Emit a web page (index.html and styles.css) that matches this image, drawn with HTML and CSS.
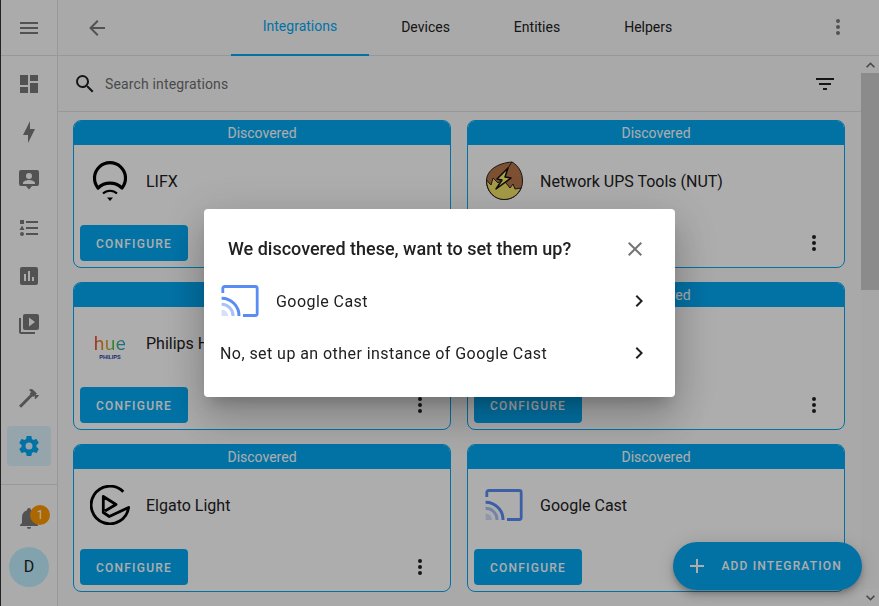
FILE: index.html
```html
<!DOCTYPE html>
<html lang="en">
<head>
    <meta charset="UTF-8">
    <title>Integrations</title>
    <link rel="stylesheet" href="styles.css">
</head>
<body>
    <svg class="defs" width="0" height="0">
        <symbol id="i-dots" viewBox="0 0 24 24"><path d="M12,16A2,2 0 0,1 14,18A2,2 0 0,1 12,20A2,2 0 0,1 10,18A2,2 0 0,1 12,16M12,10A2,2 0 0,1 14,12A2,2 0 0,1 12,14A2,2 0 0,1 10,12A2,2 0 0,1 12,10M12,4A2,2 0 0,1 14,6A2,2 0 0,1 12,8A2,2 0 0,1 10,6A2,2 0 0,1 12,4Z"/></symbol>
        <symbol id="i-chevron" viewBox="0 0 24 24"><path d="M8.59,16.58L13.17,12L8.59,7.41L10,6L16,12L10,18L8.59,16.58Z"/></symbol>
        <symbol id="i-cast" viewBox="0 0 40 40">
            <path d="M2.8 12V7.5A2 2 0 0 1 4.8 5.5H35.2A2 2 0 0 1 37.2 7.5V32.5A2 2 0 0 1 35.2 34.5H23" fill="none" stroke="#5a8cf5" stroke-width="2.8"/>
            <path d="M1.6 17.2A17.4 17.4 0 0 1 19 35" fill="none" stroke="#5a8cf5" stroke-width="3"/>
            <path d="M1.6 23.2A11.4 11.4 0 0 1 13 35" fill="none" stroke="#a9c3f8" stroke-width="3"/>
            <path d="M1.6 28.6A6.4 6.4 0 0 1 8 35H1.6Z" fill="#d3e0fc"/>
        </symbol>
    </svg>

    <aside class="sidebar">
        <div class="sidebar-head">
            <svg class="icon" viewBox="0 0 24 24"><path d="M3,6H21V8H3V6M3,11H21V13H3V11M3,16H21V18H3V16Z"/></svg>
        </div>
        <nav class="nav">
            <a class="nav-item"><svg class="icon" viewBox="0 0 24 24"><path d="M13,3V9H21V3M13,21H21V11H13M3,21H11V15H3M3,13H11V3H3V13Z"/></svg></a>
            <a class="nav-item"><svg class="icon" viewBox="0 0 24 24"><path d="M11,15H6L13,1V9H18L11,23V15Z"/></svg></a>
            <a class="nav-item"><svg class="icon" viewBox="0 0 24 24"><path fill-rule="evenodd" d="M4 2H20A2 2 0 0 1 22 4V16A2 2 0 0 1 20 18H15L12 21.5L9 18H4A2 2 0 0 1 2 16V4A2 2 0 0 1 4 2ZM12 5A3 3 0 0 0 12 11A3 3 0 0 0 12 5ZM6 16H18V15C18 13 14 12 12 12C10 12 6 13 6 15Z"/></svg></a>
            <a class="nav-item"><svg class="icon" viewBox="0 0 24 24"><path d="M5,9.5L7.5,14H2.5L5,9.5M3,4H7V8H3V4M5,20A2,2 0 0,0 7,18A2,2 0 0,0 5,16A2,2 0 0,0 3,18A2,2 0 0,0 5,20M9,5V7H21V5H9M9,19H21V17H9V19M9,13H21V11H9V13Z"/></svg></a>
            <a class="nav-item"><svg class="icon" viewBox="0 0 24 24"><path fill-rule="evenodd" d="M9 17H7V10H9V17M13 17H11V7H13V17M17 17H15V13H17V17M19 3H5C3.9 3 3 3.9 3 5V19C3 20.1 3.9 21 5 21H19C20.1 21 21 20.1 21 19V5C21 3.9 20.1 3 19 3Z"/></svg></a>
            <a class="nav-item"><svg class="icon" viewBox="0 0 24 24"><path fill-rule="evenodd" d="M4 6H2V20C2 21.1 2.9 22 4 22H18V20H4V6M20 2H8C6.9 2 6 2.9 6 4V16C6 17.1 6.9 18 8 18H20C21.1 18 22 17.1 22 16V4C22 2.9 21.1 2 20 2M12 14.5V5.5L18 10L12 14.5Z"/></svg></a>
        </nav>
        <div class="nav-bottom">
            <a class="nav-item"><svg class="icon" viewBox="0 0 24 24"><path d="M2 19.63L13.43 8.2L12.72 7.5L14.14 6.07L12 3.89C13.2 2.7 15.09 2.7 16.27 3.89L19.87 7.5L18.45 8.91H21.29L22 9.62L18.45 13.21L17.74 12.5V9.62L16.27 11.04L15.56 10.33L4.13 21.76L2 19.63Z"/></svg></a>
            <a class="nav-item selected"><svg class="icon" viewBox="0 0 24 24"><path d="M12,15.5A3.5,3.5 0 0,1 8.5,12A3.5,3.5 0 0,1 12,8.5A3.5,3.5 0 0,1 15.5,12A3.5,3.5 0 0,1 12,15.5M19.43,12.97C19.47,12.65 19.5,12.33 19.5,12C19.5,11.67 19.47,11.34 19.43,11L21.54,9.37C21.73,9.22 21.78,8.95 21.66,8.73L19.66,5.27C19.54,5.05 19.27,4.96 19.05,5.05L16.56,6.05C16.04,5.66 15.5,5.32 14.87,5.07L14.5,2.42C14.46,2.18 14.25,2 14,2H10C9.75,2 9.54,2.18 9.5,2.42L9.13,5.07C8.5,5.32 7.96,5.66 7.44,6.05L4.95,5.05C4.73,4.96 4.46,5.05 4.34,5.27L2.34,8.73C2.21,8.95 2.27,9.22 2.46,9.37L4.57,11C4.53,11.34 4.5,11.67 4.5,12C4.5,12.33 4.53,12.65 4.57,12.97L2.46,14.63C2.27,14.78 2.21,15.05 2.34,15.27L4.34,18.73C4.46,18.95 4.73,19.03 4.95,18.95L7.44,17.94C7.96,18.34 8.5,18.68 9.13,18.93L9.5,21.58C9.54,21.82 9.75,22 10,22H14C14.25,22 14.46,21.82 14.5,21.58L14.87,18.93C15.5,18.67 16.04,18.34 16.56,17.94L19.05,18.95C19.27,19.03 19.54,18.95 19.66,18.73L21.66,15.27C21.78,15.05 21.73,14.78 21.54,14.63L19.43,12.97Z"/></svg></a>
        </div>
        <div class="sidebar-foot">
            <div class="bell">
                <svg class="icon" viewBox="0 0 24 24"><path d="M21,19V20H3V19L5,17V11C5,7.9 7.03,5.17 10,4.29C10,4.19 10,4.1 10,4A2,2 0 0,1 12,2A2,2 0 0,1 14,4C14,4.1 14,4.19 14,4.29C16.97,5.17 19,7.9 19,11V17L21,19M14,21A2,2 0 0,1 12,23A2,2 0 0,1 10,21"/></svg>
                <span class="badge">1</span>
            </div>
            <div class="avatar">D</div>
        </div>
    </aside>

    <main class="main">
        <header class="topbar">
            <svg class="icon back" viewBox="0 0 24 24"><path d="M20,11V13H8L13.5,18.5L12.08,19.92L4.16,12L12.08,4.08L13.5,5.5L8,11H20Z"/></svg>
            <div class="tabs">
                <a class="tab active">Integrations</a>
                <a class="tab">Devices</a>
                <a class="tab">Entities</a>
                <a class="tab">Helpers</a>
            </div>
            <svg class="icon more"><use href="#i-dots"/></svg>
        </header>

        <div class="pane">
            <div class="content">
                <div class="search">
                    <svg class="icon dark" viewBox="0 0 24 24"><path d="M9.5,3A6.5,6.5 0 0,1 16,9.5C16,11.11 15.41,12.59 14.44,13.73L14.71,14H15.5L20.5,19L19,20.5L14,15.5V14.71L13.73,14.44C12.59,15.41 11.11,16 9.5,16A6.5,6.5 0 0,1 3,9.5A6.5,6.5 0 0,1 9.5,3M9.5,5C7,5 5,7 5,9.5C5,12 7,14 9.5,14C12,14 14,12 14,9.5C14,7 12,5 9.5,5Z"/></svg>
                    <span class="search-text">Search integrations</span>
                    <svg class="icon dark filter" viewBox="0 0 24 24"><path d="M6,13H18V11H6M3,6V8H21V6M10,18H14V16H10V18Z"/></svg>
                </div>

                <div class="grid">
                    <section class="card">
                        <div class="card-head">Discovered</div>
                        <div class="card-body">
                            <svg class="logo" viewBox="0 0 40 40" fill="none" stroke="#000">
                                <path stroke-width="3.2" stroke-linejoin="round" d="M8 27A15.5 15.5 0 1 1 32 27A17 17 0 0 0 8 27Z"/>
                                <path stroke-width="2" d="M13 32.5A10 10 0 0 1 27 32.5"/>
                                <path fill="#000" stroke="none" d="M17 36.5H23L20 40Z"/>
                            </svg>
                            <span class="card-name">LIFX</span>
                        </div>
                        <div class="card-actions">
                            <button class="btn">CONFIGURE</button>
                            <svg class="icon dots"><use href="#i-dots"/></svg>
                        </div>
                    </section>

                    <section class="card">
                        <div class="card-head">Discovered</div>
                        <div class="card-body">
                            <svg class="logo" viewBox="0 0 40 40">
                                <path fill="#b8764a" stroke="#222" d="M28 1C35 5 38.5 12 38.5 20C38.5 31 30 38.5 20 38.5C11 38.5 2.5 31 2.5 20C2.5 9 14 2 28 1Z"/>
                                <path fill="#f4e468" stroke="#222" d="M2.5 19L7 24L9 17L14 22L18 17L26 27L29 23L31 28L37 27C34 34 28 38.5 20 38.5C11 38.5 2.5 31 2.5 19Z"/>
                                <path fill="#fff36a" stroke="#111" stroke-width="1.5" stroke-linejoin="round" d="M24 7L13 18L18 19L12 28L27 17L21 16Z"/>
                                <path fill="none" stroke="#222" d="M28 1L24 7"/>
                            </svg>
                            <span class="card-name">Network UPS Tools (NUT)</span>
                        </div>
                        <div class="card-actions">
                            <button class="btn">CONFIGURE</button>
                            <svg class="icon dots"><use href="#i-dots"/></svg>
                        </div>
                    </section>

                    <section class="card">
                        <div class="card-head">Discovered</div>
                        <div class="card-body">
                            <div class="logo hue">
                                <span class="hue-word">hue</span>
                                <span class="hue-brand">PHILIPS</span>
                            </div>
                            <span class="card-name">Philips Hue</span>
                        </div>
                        <div class="card-actions">
                            <button class="btn">CONFIGURE</button>
                            <svg class="icon dots"><use href="#i-dots"/></svg>
                        </div>
                    </section>

                    <section class="card">
                        <div class="card-head">Discovered</div>
                        <div class="card-body"></div>
                        <div class="card-actions">
                            <button class="btn">CONFIGURE</button>
                            <svg class="icon dots"><use href="#i-dots"/></svg>
                        </div>
                    </section>

                    <section class="card">
                        <div class="card-head">Discovered</div>
                        <div class="card-body">
                            <svg class="logo" viewBox="0 0 40 40" fill="none" stroke="#000" stroke-width="2.8" stroke-linejoin="round">
                                <path d="M33.3 6.7A18.8 18.8 0 1 0 38.6 22.5L19.3 31.5L13.3 27.5V11.5L26 19.5L15 26"/>
                            </svg>
                            <span class="card-name">Elgato Light</span>
                        </div>
                        <div class="card-actions">
                            <button class="btn">CONFIGURE</button>
                            <svg class="icon dots"><use href="#i-dots"/></svg>
                        </div>
                    </section>

                    <section class="card">
                        <div class="card-head">Discovered</div>
                        <div class="card-body">
                            <svg class="logo"><use href="#i-cast"/></svg>
                            <span class="card-name">Google Cast</span>
                        </div>
                        <div class="card-actions">
                            <button class="btn">CONFIGURE</button>
                            <svg class="icon dots"><use href="#i-dots"/></svg>
                        </div>
                    </section>
                </div>
            </div>

            <div class="scrollbar">
                <div class="scroll-arrow"><svg viewBox="0 0 10 6"><path d="M0 5L5 0L10 5L8.7 6L5 2.5L1.3 6Z"/></svg></div>
                <div class="scroll-thumb"></div>
                <div class="scroll-track"></div>
                <div class="scroll-arrow"><svg viewBox="0 0 10 6"><path d="M0 1L5 6L10 1L8.7 0L5 3.5L1.3 0Z"/></svg></div>
            </div>
        </div>

        <button class="fab">
            <svg class="icon" viewBox="0 0 24 24"><path d="M19,13H13V19H11V13H5V11H11V5H13V11H19V13Z"/></svg>
            <span>ADD INTEGRATION</span>
        </button>
    </main>

    <div class="scrim"></div>

    <div class="dialog">
        <div class="dialog-head">
            <h2>We discovered these, want to set them up?</h2>
            <svg class="icon close" viewBox="0 0 24 24"><path d="M19,6.41L17.59,5L12,10.59L6.41,5L5,6.41L10.59,12L5,17.59L6.41,19L12,13.41L17.59,19L19,17.59L13.41,12L19,6.41Z"/></svg>
        </div>
        <div class="flow-item">
            <svg class="logo"><use href="#i-cast"/></svg>
            <span class="flow-name">Google Cast</span>
            <svg class="icon chevron"><use href="#i-chevron"/></svg>
        </div>
        <div class="flow-item">
            <span class="flow-text">No, set up an other instance of Google Cast</span>
            <svg class="icon chevron"><use href="#i-chevron"/></svg>
        </div>
    </div>
</body>
</html>
```
FILE: styles.css
```css
* {
    box-sizing: border-box;
}
body {
    margin: 0;
    height: 100vh;
    display: flex;
    overflow: hidden;
    font-family: Roboto, sans-serif;
    background-color: #fafafa;
    color: #212121;
}
.defs {
    position: absolute;
}
.icon {
    width: 24px;
    height: 24px;
    flex: none;
    display: block;
    fill: #7a7a7a;
}
.icon.dark {
    fill: #212121;
}

/* sidebar */
.sidebar {
    width: 58px;
    flex: none;
    display: flex;
    flex-direction: column;
    border-left: 1px solid #333333;
    border-right: 1px solid #e0e0e0;
    background-color: #fdfdfd;
}
.sidebar-head {
    height: 56px;
    flex: none;
    display: flex;
    align-items: center;
    justify-content: center;
    border-bottom: 1px solid #e0e0e0;
}
.nav {
    padding-top: 4px;
}
.nav-item {
    height: 48px;
    display: flex;
    align-items: center;
    justify-content: center;
}
.nav-bottom {
    margin-top: 26px;
    flex: 1;
}
.nav-item.selected {
    height: 40px;
    margin: 4px 6px 0;
    border-radius: 4px;
    background-color: rgba(3, 169, 244, 0.12);
}
.nav-item.selected .icon {
    fill: #03a9f4;
}
.sidebar-foot {
    height: 122px;
    flex: none;
    border-top: 1px solid #e0e0e0;
    display: flex;
    flex-direction: column;
    align-items: center;
    padding-top: 21px;
}
.bell {
    position: relative;
    width: 24px;
    height: 24px;
}
.badge {
    position: absolute;
    top: -1px;
    left: 13px;
    width: 20px;
    height: 20px;
    border-radius: 50%;
    background-color: #ff9800;
    color: #ffffff;
    font-size: 12px;
    line-height: 20px;
    text-align: center;
}
.avatar {
    width: 40px;
    height: 40px;
    margin-top: 17px;
    border-radius: 50%;
    background-color: #c0f0ff;
    font-size: 16px;
    line-height: 40px;
    text-align: center;
}

/* top bar */
.main {
    position: relative;
    flex: 1;
    min-width: 0;
    display: flex;
    flex-direction: column;
}
.topbar {
    height: 56px;
    flex: none;
    display: flex;
    align-items: center;
    justify-content: space-between;
    padding: 0 29px 0 27px;
    border-bottom: 1px solid #e0e0e0;
}
.more {
    margin-top: -1px;
}
.tabs {
    display: flex;
    align-self: stretch;
}
.tab {
    display: block;
    height: 56px;
    padding: 0 32px;
    font-size: 14px;
    line-height: 55px;
    color: #212121;
}
.tab.active {
    line-height: 53px;
    color: #03a9f4;
    border-bottom: 2px solid #03a9f4;
}

/* search + cards */
.pane {
    flex: 1;
    min-height: 0;
    display: flex;
}
.content {
    flex: 1;
    min-width: 0;
    overflow: hidden;
}
.search {
    height: 56px;
    display: flex;
    align-items: center;
    gap: 8px;
    padding: 0 24px 0 15px;
    border-bottom: 1px solid #e0e0e0;
}
.search-text {
    flex: 1;
    font-size: 14px;
    letter-spacing: 0.15px;
    color: #6e6e6e;
}
.grid {
    display: grid;
    grid-template-columns: 378px 378px;
    gap: 14px 16px;
    padding: 8px 0 0 15px;
}
.card {
    height: 148px;
    display: flex;
    flex-direction: column;
    border: 1px solid #03a9f4;
    border-radius: 8px;
    overflow: hidden;
    background-color: #ffffff;
}
.card-head {
    height: 24px;
    flex: none;
    background-color: #03a9f4;
    color: #ffffff;
    font-size: 14px;
    line-height: 24px;
    text-align: center;
}
.card-body {
    height: 80px;
    flex: none;
    display: flex;
    align-items: flex-start;
    padding: 16px 16px 0;
}
.logo {
    width: 40px;
    height: 40px;
    flex: none;
}
.card-name {
    margin-left: 16px;
    font-size: 16px;
    line-height: 42px;
}
.card-actions {
    display: flex;
    align-items: center;
    justify-content: space-between;
    padding: 0 18px 0 6px;
}
.btn {
    width: 108px;
    height: 36px;
    padding: 2px 0 0;
    border: none;
    border-radius: 4px;
    background-color: #03a9f4;
    color: #ffffff;
    font-family: inherit;
    font-size: 12px;
    font-weight: 500;
    letter-spacing: 1.25px;
}
.dots {
    fill: #212121;
}

/* hue logo */
.hue {
    display: flex;
    flex-direction: column;
    align-items: center;
    padding-top: 10px;
}
.hue-word {
    font-family: Lato, sans-serif;
    font-size: 19px;
    font-weight: 400;
    line-height: 19px;
    letter-spacing: 0.5px;
    background: linear-gradient(90deg, #e8352c, #f2a21e 35%, #55bd4a 60%, #1f9be0);
    -webkit-background-clip: text;
    background-clip: text;
    color: transparent;
}
.hue-brand {
    margin-top: 2px;
    font-family: "Liberation Sans", sans-serif;
    font-size: 5.5px;
    font-weight: 700;
    color: #2438a8;
}

/* scrollbar */
.scrollbar {
    width: 18px;
    flex: none;
    display: flex;
    flex-direction: column;
    background-color: #f6f6f6;
}
.scroll-arrow {
    height: 17px;
    flex: none;
    display: flex;
    align-items: center;
    justify-content: center;
    background-color: #fafafa;
}
.scroll-arrow svg {
    width: 9px;
    height: 6px;
    fill: #6a6a6a;
}
.scroll-thumb {
    height: 217px;
    flex: none;
    background-color: #cdcdcd;
}
.scroll-track {
    flex: 1;
}

/* floating button */
.fab {
    position: absolute;
    right: 17px;
    bottom: 16px;
    height: 48px;
    display: flex;
    align-items: center;
    gap: 12px;
    padding: 0 20px 0 12px;
    border: none;
    border-radius: 24px;
    background-color: #03a9f4;
    color: #ffffff;
    font-family: inherit;
    font-size: 12px;
    font-weight: 500;
    letter-spacing: 1.18px;
    box-shadow: 0 3px 5px -1px rgba(0, 0, 0, 0.2), 0 6px 10px 0 rgba(0, 0, 0, 0.14), 0 1px 18px 0 rgba(0, 0, 0, 0.12);
}
.fab .icon {
    fill: #ffffff;
}

/* dialog */
.scrim {
    position: fixed;
    inset: 0;
    background-color: rgba(0, 0, 0, 0.32);
}
.dialog {
    position: fixed;
    left: 204px;
    top: 209px;
    width: 471px;
    height: 188px;
    border-radius: 4px;
    background-color: #ffffff;
    box-shadow: 0 11px 15px -7px rgba(0, 0, 0, 0.2), 0 24px 38px 3px rgba(0, 0, 0, 0.14), 0 9px 46px 8px rgba(0, 0, 0, 0.12);
}
.dialog-head {
    height: 66px;
    display: flex;
    align-items: center;
    justify-content: space-between;
    padding: 13px 28px 0 24px;
}
.dialog-head h2 {
    margin: 0;
    font-size: 18px;
    font-weight: 500;
    line-height: 24px;
    color: #212121;
}
.close {
    fill: #757575;
}
.flow-item {
    height: 52px;
    display: flex;
    align-items: center;
    padding: 0 24px 0 16px;
    font-size: 16px;
    letter-spacing: 0.44px;
}
.flow-name {
    flex: 1;
    margin-left: 16px;
}
.flow-text {
    flex: 1;
}
.chevron {
    fill: #212121;
}
```
